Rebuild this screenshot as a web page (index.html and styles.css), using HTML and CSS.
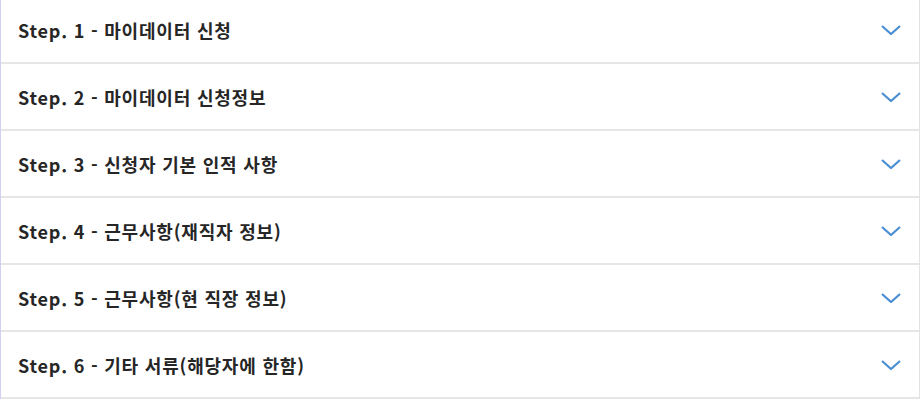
FILE: index.html
```html
<!DOCTYPE html>
<html lang="ko">
<head>
  <meta charset="UTF-8" />
  <title>마이데이터 신청</title>
  <link rel="stylesheet" href="styles.css">
</head>
<body>
  <div class="accordion">
    <div class="acc-item"><span class="acc-title">Step. 1 - 마이데이터 신청</span><svg class="chev" viewBox="0 0 20 10"><path d="M1 1 L10 9 L19 1"/></svg></div>
    <div class="acc-item"><span class="acc-title">Step. 2 - 마이데이터 신청정보</span><svg class="chev" viewBox="0 0 20 10"><path d="M1 1 L10 9 L19 1"/></svg></div>
    <div class="acc-item"><span class="acc-title">Step. 3 - 신청자 기본 인적 사항</span><svg class="chev" viewBox="0 0 20 10"><path d="M1 1 L10 9 L19 1"/></svg></div>
    <div class="acc-item"><span class="acc-title">Step. 4 - 근무사항(재직자 정보)</span><svg class="chev" viewBox="0 0 20 10"><path d="M1 1 L10 9 L19 1"/></svg></div>
    <div class="acc-item"><span class="acc-title">Step. 5 - 근무사항(현 직장 정보)</span><svg class="chev" viewBox="0 0 20 10"><path d="M1 1 L10 9 L19 1"/></svg></div>
    <div class="acc-item"><span class="acc-title">Step. 6 - 기타 서류(해당자에 한함)</span><svg class="chev" viewBox="0 0 20 10"><path d="M1 1 L10 9 L19 1"/></svg></div>
  </div>
</body>
</html>
```

FILE: styles.css
```css
* { margin:0; padding:0; box-sizing:border-box; }
body { background:#fff; font-family:"Noto Sans CJK KR", "Noto Sans", sans-serif; color:#222; overflow:hidden; }

/* Accordion list */
.accordion {
  width:920px; margin-top:-3px;
  border-left:1px solid #cfd0f2; border-right:1px solid #e2e2e2;
}
.acc-item {
  height:67px; display:flex; align-items:center; justify-content:space-between;
  padding:0 18px 0 17px; border-bottom:2px solid #e6e6e6;
}
.acc-title { font-size:18px; font-weight:700; letter-spacing:0.8px; color:#262626; }
.chev { width:20px; height:10px; fill:none; stroke:#4a8ed4; stroke-width:2.2; }
```
